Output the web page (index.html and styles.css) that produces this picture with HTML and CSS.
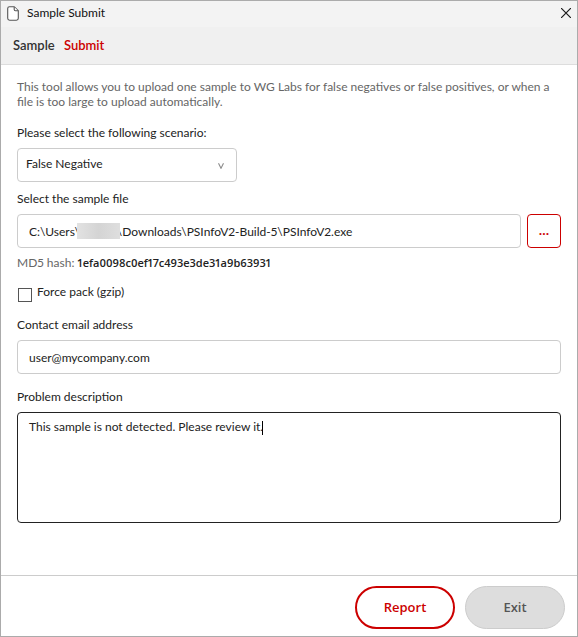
FILE: index.html
```
<!DOCTYPE html>
<html lang="en">
<head>
  <meta charset="UTF-8">
  <meta name="viewport" content="width=device-width, initial-scale=1">
  <title>Sample Submit</title>
  <link rel="stylesheet" href="styles.css">
</head>
<body>
<div class="window">
  <div class="titlebar">
    <svg class="file-icon" width="12" height="15" viewBox="0 0 12 15" fill="#fff" stroke="#555" stroke-width="1.1" aria-hidden="true">
      <path d="M2.5 .7H7.2L11.3 4.8V12.3Q11.3 14.2 9.4 14.2H2.6Q.7 14.2 .7 12.3V2.6Q.7 .7 2.5 .7Z"/>
      <path d="M7.2 .9V3.6Q7.2 4.8 8.4 4.8H11.1"/>
    </svg>
    <span class="caption">Sample Submit</span>
    <button type="button" class="close" aria-label="Close">
      <svg width="10" height="10" viewBox="0 0 10 10" stroke="#1a1a1a" stroke-width="1.2"><path d="M0 0L10 10M10 0L0 10"/></svg>
    </button>
  </div>

  <h1 class="brand">Sample <span>Submit</span></h1>

  <form class="form" id="submit-form">
    <p class="intro">This tool allows you to upload one sample to WG Labs for false negatives or false positives, or when a file is too large to upload automatically.</p>

    <div class="field">
      <label for="scenario">Please select the following scenario:</label>
      <div class="select">
        <select id="scenario">
          <option>False Negative</option>
          <option>False Positive</option>
        </select>
        <svg class="arrow" width="6" height="6" viewBox="0 0 6 6" fill="none" stroke="#8c8c8c" stroke-width="1.1" aria-hidden="true"><path d="M.5 .3L3 5.3L5.5 .3"/></svg>
      </div>
    </div>

    <div class="field">
      <label for="file">Select the sample file</label>
      <div class="file-row">
        <div class="path">
          <input type="text" id="file" value="C:\Users\            \Downloads\PSInfoV2-Build-5\PSInfoV2.exe">
          <span class="redacted"></span>
        </div>
        <button type="button" class="browse" aria-label="Browse">...</button>
      </div>
      <p class="hash">MD5 hash: <b>1efa0098c0ef17c493e3de31a9b63931</b></p>
    </div>

    <div class="check">
      <input type="checkbox" id="pack">
      <label for="pack">Force pack (gzip)</label>
    </div>

    <div class="field">
      <label for="email">Contact email address</label>
      <input type="email" id="email" value="user@mycompany.com">
    </div>

    <div class="field">
      <label for="problem">Problem description</label>
      <div class="problem">
        <textarea id="problem">This sample is not detected. Please review it.</textarea>
        <span class="caret"></span>
      </div>
    </div>
  </form>

  <div class="footer">
    <button type="submit" form="submit-form" class="report">Report</button>
    <button type="button" class="exit">Exit</button>
  </div>
</div>
</body>
</html>
```

FILE: styles.css
```
* {
  box-sizing: border-box;
}

body {
  margin: 0;
  color: #222;
  font: 12px/16px "Segoe UI", Lato, sans-serif;
  font-variant-numeric: proportional-nums;
}

.window {
  display: flex;
  flex-direction: column;
  min-height: 100vh;
  border: 1px solid #ababab;
  background: #fff;
}

.titlebar {
  display: flex;
  align-items: center;
  gap: 8px;
  height: 26px;
  padding: 0 6px 2px;
  background: #f3f3f3;
  color: #111;
}

.caption {
  flex: 1;
}

.close {
  display: flex;
  padding: 0;
  border: none;
  background: none;
}

.brand {
  margin: 0;
  padding: 9px 12px 10px;
  border-bottom: 1px solid #ddd;
  background: #f0f0f0;
  color: #333;
  font-size: 13px;
  font-weight: 600;
  line-height: 18px;
}

.brand span {
  margin-left: 6px;
  color: #c00;
}

/* form */
.form {
  flex: 1;
  padding: 14px 16px 16px;
}

.intro {
  margin: 0 0 16px;
  color: #666;
  line-height: 15px;
}

.field {
  margin-bottom: 9px;
}

.field label {
  display: block;
  margin-bottom: 7px;
}

input,
select,
textarea,
button {
  color: inherit;
  font: inherit;
  font-variant-numeric: inherit;
}

select,
input[type="text"],
input[type="email"],
textarea {
  display: block;
  width: 100%;
  height: 34px;
  padding: 0 11px;
  border: 1px solid #ccc;
  border-radius: 4px;
  background: #fff;
  outline: none;
}

.select {
  position: relative;
  width: 220px;
}

.select select {
  padding: 0 24px 2px 8px;
  appearance: none;
}

.arrow {
  position: absolute;
  top: 15px;
  right: 13px;
  pointer-events: none;
}

.file-row {
  display: flex;
  gap: 6px;
}

.path {
  position: relative;
  flex: 1;
}

/* covers the user name in the path */
.redacted {
  position: absolute;
  top: 9px;
  left: 60px;
  width: 43px;
  height: 16px;
  background: linear-gradient(90deg, #e2e2e2, #d4d4d4 50%, #dedede);
}

.browse {
  width: 34px;
  height: 34px;
  padding: 0;
  border: 1px solid #c00;
  border-radius: 4px;
  background: #fff;
  color: #c00;
  font-family: "Segoe UI", "Open Sans", sans-serif;
  font-weight: 700;
}

.hash {
  margin: 7px 0 13px;
  color: #666;
}

.hash b {
  color: #222;
  font-family: "Segoe UI", "Open Sans", sans-serif;
  font-size: 11px;
  font-weight: 600;
}

.check {
  display: flex;
  align-items: flex-start;
  gap: 5px;
  margin-bottom: 15px;
}

.check input {
  width: 14px;
  height: 14px;
  margin: 4px 0 0 1px;
  border: 1px solid #555;
  background: #fff;
  appearance: none;
}

.check input:checked {
  background: #c00;
}

.field + .check + .field {
  margin-bottom: 15px;
}

.problem {
  position: relative;
}

.problem textarea {
  height: 111px;
  padding: 6px 11px;
  border-color: #222;
  resize: none;
}

.caret {
  position: absolute;
  top: 9px;
  left: 245px;
  width: 1px;
  height: 14px;
  background: #000;
}

.footer {
  display: flex;
  justify-content: flex-end;
  gap: 10px;
  padding: 10px 12px 7px;
  border-top: 1px solid #ccc;
}

.footer button {
  width: 100px;
  height: 43px;
  padding: 0 0 2px;
  border-radius: 22px;
  font-family: "Segoe UI", "Open Sans", sans-serif;
  font-size: 13px;
  font-weight: 600;
}

.report {
  border: 2px solid #c00;
  background: #fff;
  color: #c00;
}

.exit {
  border: 1px solid #ccc;
  background: #ddd;
  color: #555;
}
```
